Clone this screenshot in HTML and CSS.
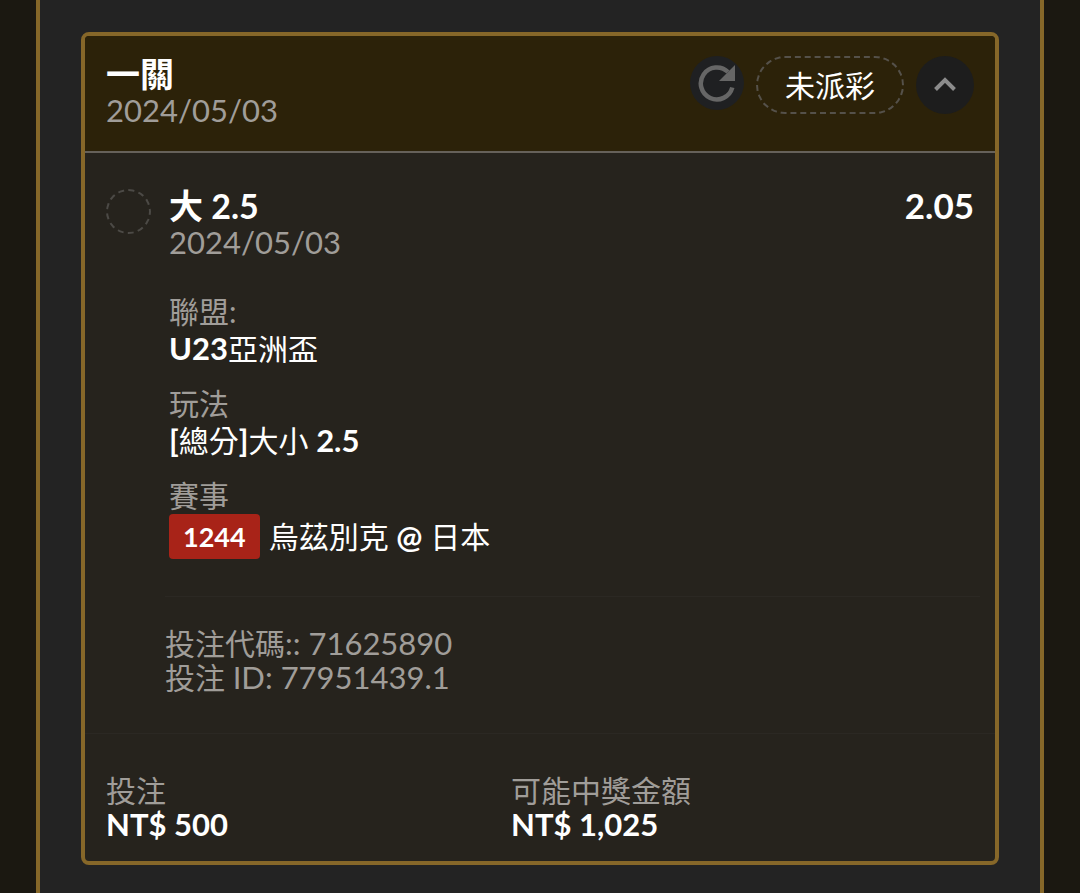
FILE: index.html
```html
<!DOCTYPE html>
<html lang="zh-Hant">
<head>
<meta charset="utf-8">
<meta name="viewport" content="width=device-width, initial-scale=1">
<title>投注</title>
<link rel="stylesheet" href="styles.css">
</head>
<body>
<main class="panel">
  <article class="card">
    <header class="card-head">
      <div class="head-text">
        <h1 class="title">一關</h1>
        <p class="muted date">2024/05/03</p>
      </div>
      <div class="actions">
        <button class="round refresh" type="button" aria-label="重新整理">
          <svg width="40" height="40" viewBox="0 0 40 40" aria-hidden="true">
            <path d="M35.3 24.5A16 16 0 1 1 31 9" fill="none" stroke="#666" stroke-width="4.5"/>
            <path d="M38 2V18H22Z" fill="#666"/>
          </svg>
        </button>
        <span class="pill">未派彩</span>
        <button class="round toggle" type="button" aria-label="收合">
          <svg width="24" height="18" viewBox="0 0 24 18" aria-hidden="true">
            <path d="M2.5 13.5L12 4L21.5 13.5" fill="none" stroke="#8c8c8c" stroke-width="4"/>
          </svg>
        </button>
      </div>
    </header>

    <section class="bet">
      <span class="mark"></span>
      <div class="bet-main">
        <div class="bet-top">
          <h2 class="title">大 2.5</h2>
          <span class="title odds">2.05</span>
        </div>
        <p class="muted date">2024/05/03</p>
        <dl class="fields">
          <div>
            <dt class="muted">聯盟:</dt>
            <dd><b>U23</b>亞洲盃</dd>
          </div>
          <div>
            <dt class="muted">玩法</dt>
            <dd><b>[</b>總分<b>]</b>大小 <b>2.5</b></dd>
          </div>
          <div>
            <dt class="muted">賽事</dt>
            <dd class="match"><span class="tag">1244</span><span>烏茲別克 <b>@</b> 日本</span></dd>
          </div>
        </dl>
      </div>
    </section>

    <section class="ids muted">
      <p>投注代碼<span class="num">:: 71625890</span></p>
      <p>投注 <span class="num">ID: 77951439.1</span></p>
    </section>

    <footer class="totals">
      <div>
        <p class="muted">投注</p>
        <p class="amount">NT$ 500</p>
      </div>
      <div>
        <p class="muted">可能中獎金額</p>
        <p class="amount">NT$ 1,025</p>
      </div>
    </footer>
  </article>
</main>
</body>
</html>
```

FILE: styles.css
```css
* {
  box-sizing: border-box;
  margin: 0;
  padding: 0;
}

body {
  background: #1b1811;
  color: #fff;
  font-family: Lato, "Noto Sans CJK TC", sans-serif;
  font-size: 30px;
  line-height: 37px;
}

.panel {
  min-height: 100vh;
  margin: 0 36px;
  padding: 32px 41px 28px;
  background: #232323;
  border: solid #866729;
  border-width: 0 4px;
}

.card {
  background: #26231d;
  border: 4px solid #866729;
  border-radius: 8px;
}

.muted {
  color: #a09d99;
}

.title {
  font-size: 34px;
  font-weight: 700;
  line-height: 37px;
}

.odds {
  font-size: 35px;
}

.date {
  font-size: 31px;
}

.card-head {
  display: flex;
  justify-content: space-between;
  align-items: flex-start;
  padding: 19px 21px 22px;
  background: #2c2209;
  border-bottom: 2px solid #66615a;
  border-radius: 4px 4px 0 0;
}

.actions {
  display: flex;
  gap: 12px;
  padding-top: 1px;
}

.round {
  display: flex;
  align-items: center;
  justify-content: center;
  border: 0;
  border-radius: 50%;
}

.refresh {
  width: 54px;
  height: 54px;
  background: #1f2022;
}

.toggle {
  width: 58px;
  height: 58px;
  background: #1d1d1d;
}

.pill {
  height: 58px;
  padding: 0 27px;
  border: 2px dashed #55514a;
  border-radius: 29px;
  line-height: 54px;
}

.bet {
  display: flex;
  gap: 18px;
  padding: 34px 21px 37px;
}

.mark {
  flex: none;
  width: 45px;
  height: 45px;
  margin-top: 2px;
  border: 2px dashed #4c4a46;
  border-radius: 50%;
}

.bet-main {
  flex: 1;
}

.bet-top {
  display: flex;
  justify-content: space-between;
}

.fields {
  display: grid;
  gap: 18px;
  margin-top: 32px;
}

b,
.num,
.amount {
  font-size: 31px;
}

.match {
  display: flex;
  align-items: center;
  gap: 9px;
}

.tag {
  padding: 4px 14px;
  background: #a82318;
  border-radius: 4px;
  font-size: 27px;
  font-weight: 700;
}

.ids {
  margin: 0 15px 0 80px;
  padding: 29px 0 39px;
  border-top: 1px solid #2b2823;
  line-height: 34px;
}

.totals {
  display: grid;
  grid-template-columns: 7fr 8fr;
  padding: 39px 21px 20px;
  border-top: 1px solid #2b2823;
  line-height: 34px;
}

.amount {
  font-weight: 700;
}
```
